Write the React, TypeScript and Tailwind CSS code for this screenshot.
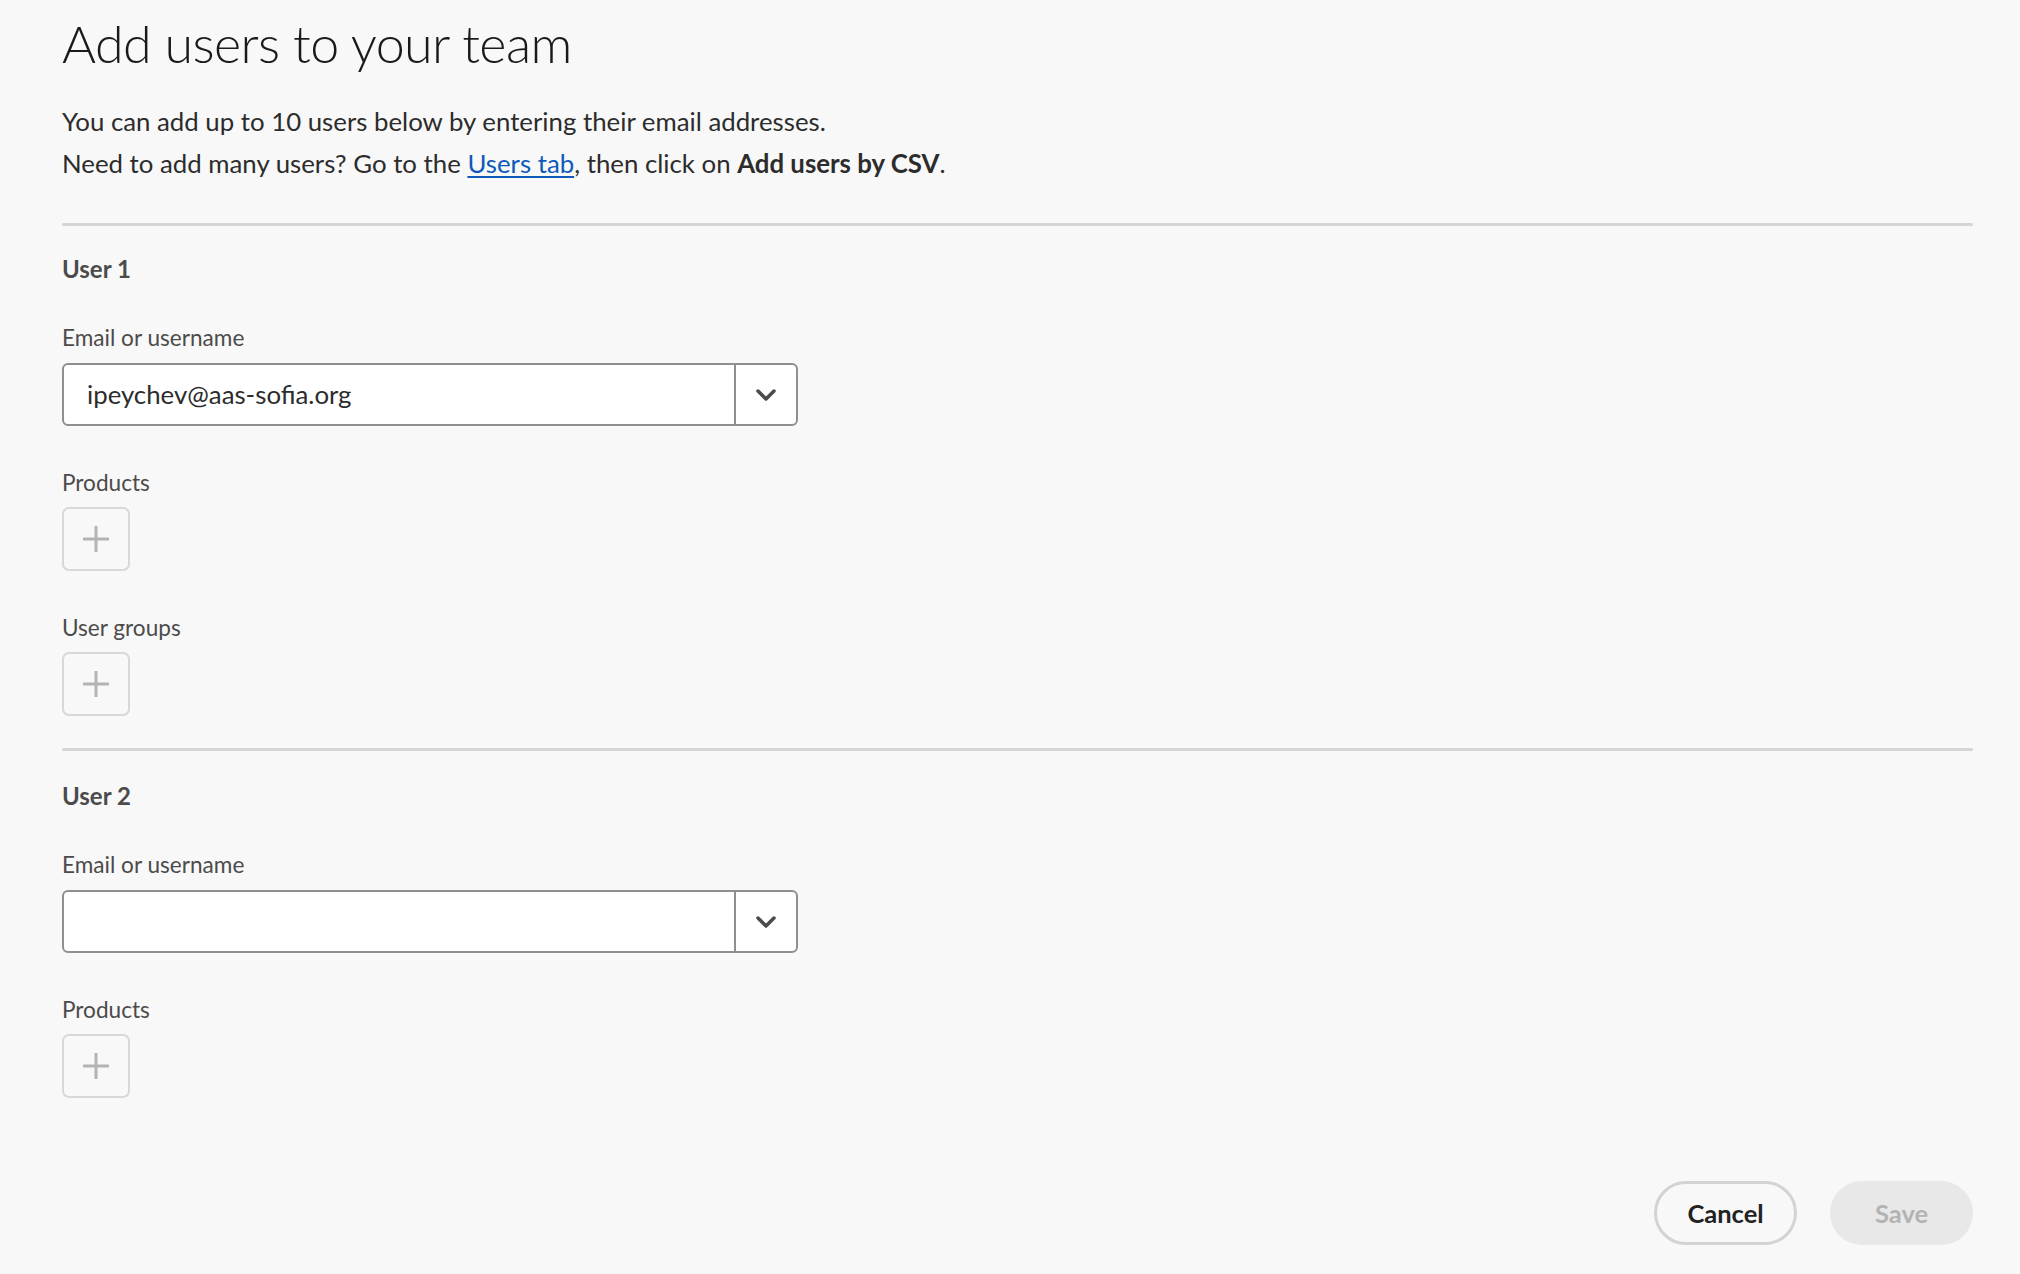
import React from 'react';

const Plus = () => (
  <button
    type="button"
    className="flex h-[64px] w-[68px] items-center justify-center rounded-[7px] border-2 border-[#d8d8d8] bg-[#f8f8f8]"
  >
    <svg width="26" height="26" viewBox="0 0 26 26">
      <path d="M13 1v24M1 13h24" stroke="#b3b3b3" strokeWidth="3" strokeLinecap="round" />
    </svg>
  </button>
);

const EmailField = ({ value }: { value?: string }) => (
  <div className="flex h-[63px] w-[736px] rounded-[6px] border-2 border-[#8f8f8f] bg-white">
    <input
      readOnly
      value={value || ''}
      className="min-w-0 flex-1 rounded-l-[6px] bg-transparent pl-[23px] text-[25.8px] text-[#2c2c2c] outline-none"
    />
    <div className="flex w-[62px] items-center justify-center border-l-2 border-[#8f8f8f]">
      <svg width="22" height="14" viewBox="0 0 22 14">
        <path d="M3 3l8 8 8-8" fill="none" stroke="#4b4b4b" strokeWidth="3.5" strokeLinecap="round" strokeLinejoin="round" />
      </svg>
    </div>
  </div>
);

const Label = ({ children }: { children: React.ReactNode }) => (
  <div className="text-[22.6px] leading-[30px] text-[#4b4b4b]">{children}</div>
);

const Divider = () => <div className="h-[3px] rounded-full bg-[#d5d5d5]" />;

const UserBlock = ({ n, email, groups }: { n: number; email?: string; groups?: boolean }) => (
  <section>
    <h2
      className={`text-[24px] font-bold leading-[30px] text-[#4b4b4b] ${n === 1 ? 'mt-[28px]' : 'mt-[30px]'}`}
    >
      User {n}
    </h2>
    <div className="mt-[39px]">
      <Label>Email or username</Label>
      <div className="mt-[10px]">
        <EmailField value={email} />
      </div>
    </div>
    <div className="mt-[42px]">
      <Label>Products</Label>
      <div className="mt-[9px]">
        <Plus />
      </div>
    </div>
    {groups && (
      <div className="mt-[42px]">
        <Label>User groups</Label>
        <div className="mt-[9px]">
          <Plus />
        </div>
      </div>
    )}
  </section>
);

export default function App() {
  return (
    <div className="min-h-screen bg-[#f8f8f8] pl-[62px] pr-[47px] pt-[13px] pb-[28px] font-['Lato',sans-serif]">
      <h1 className="text-[52px] font-light leading-[60px] tracking-[-0.6px] text-[#1a1a1a]">
        Add users to your team
      </h1>
      <p className="mt-[27px] text-[25.8px] leading-[42px] text-[#2c2c2c]">
        You can add up to 10 users below by entering their email addresses.
        <br />
        Need to add many users? Go to the{' '}
        <a href="#" className="text-[#0d5ab8] underline underline-offset-[3px]">
          Users tab
        </a>
        , then click on <b className="font-bold">Add users by CSV</b>.
      </p>

      <div className="mt-[39px]">
        <Divider />
      </div>
      <UserBlock n={1} email="ipeychev@aas-sofia.org" groups />

      <div className="mt-[32px]">
        <Divider />
      </div>
      <UserBlock n={2} />

      <div className="mt-[83px] flex justify-end gap-[33px]">
        <button
          type="button"
          className="h-[64px] w-[143px] rounded-full border-[3px] border-[#d3d3d3] text-[25.5px] font-bold text-[#222]"
        >
          Cancel
        </button>
        <button
          type="button"
          className="h-[64px] w-[143px] rounded-full bg-[#e8e8e8] text-[25.5px] font-bold text-[#b3b3b3]"
        >
          Save
        </button>
      </div>
    </div>
  );
}
